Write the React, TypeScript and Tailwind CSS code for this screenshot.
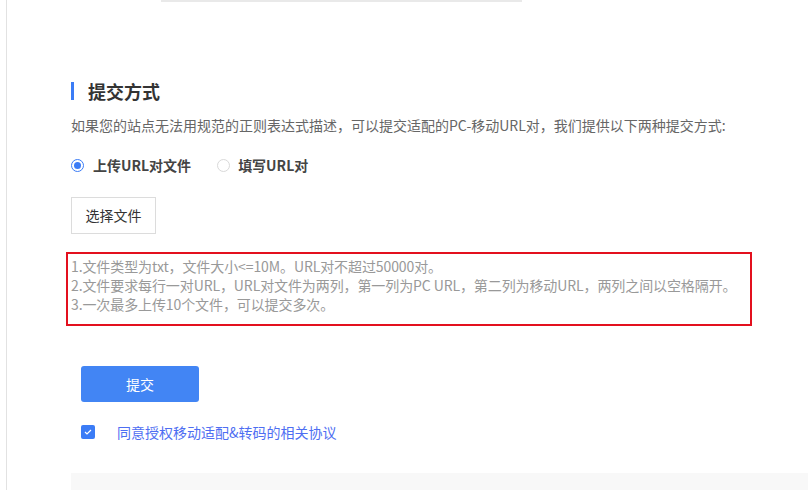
import { useState } from 'react'

const font = { fontFamily: '"Noto Sans CJK SC", "Noto Sans", sans-serif' }

export default function App() {
  const [mode, setMode] = useState<'file' | 'pair'>('file')
  const [agreed, setAgreed] = useState(true)

  return (
    <div className="w-[808px] h-[490px] overflow-hidden bg-white pl-[6px]" style={font}>
      <div className="h-full border-l border-[#e2e2e2] flex flex-col">
        {/* leftover bottom edge of the panel above */}
        <div className="ml-[154px] w-[361px] h-[2px] bg-[#e9e9e9]" />

        <div className="pl-[64px] flex flex-col">
          {/* section title */}
          <div className="mt-[79px] flex items-center h-[20px]">
            <span className="w-[3px] h-[18px] bg-[#3b7cf6]" />
            <h2 className="ml-[14px] text-[18px] font-bold leading-[20px] text-[#333]">提交方式</h2>
          </div>

          <p className="mt-[14px] text-[14px] leading-[20px] text-[#666] whitespace-nowrap">
            如果您的站点无法用规范的正则表达式描述，可以提交适配的PC-移动URL对，我们提供以下两种提交方式:
          </p>

          {/* submit mode */}
          <div className="mt-[20px] flex items-center h-[20px] text-[14px] font-bold text-[#444]">
            <button className="flex items-center" onClick={() => setMode('file')}>
              <span
                className={`w-[13px] h-[13px] rounded-full border flex items-center justify-center ${
                  mode === 'file' ? 'border-[#3b7cf6]' : 'border-[#d9d9d9]'
                }`}
              >
                {mode === 'file' && <span className="w-[7px] h-[7px] rounded-full bg-[#3b7cf6]" />}
              </span>
              <span className="ml-[9px]">上传URL对文件</span>
            </button>
            <button className="flex items-center ml-[26px]" onClick={() => setMode('pair')}>
              <span
                className={`w-[13px] h-[13px] rounded-full border flex items-center justify-center ${
                  mode === 'pair' ? 'border-[#3b7cf6]' : 'border-[#d9d9d9]'
                }`}
              >
                {mode === 'pair' && <span className="w-[7px] h-[7px] rounded-full bg-[#3b7cf6]" />}
              </span>
              <span className="ml-[8px]">填写URL对</span>
            </button>
          </div>

          <button className="mt-[22px] w-[85px] h-[37px] border border-[#dcdcdc] text-[14px] text-[#333] bg-white">
            选择文件
          </button>

          {/* notes */}
          <div className="mt-[18px] -ml-[5px] w-[686px] h-[74px] border-2 border-[#e3101e] pl-[3px] pt-[3px] text-[14px] leading-[19px] text-[#999] whitespace-nowrap tracking-[-0.1px]">
            <div>1.文件类型为txt，文件大小&lt;=10M。URL对不超过50000对。</div>
            <div>2.文件要求每行一对URL，URL对文件为两列，第一列为PC URL，第二列为移动URL，两列之间以空格隔开。</div>
            <div>3.一次最多上传10个文件，可以提交多次。</div>
          </div>

          <button className="mt-[40px] ml-[10px] w-[118px] h-[36px] rounded-[3px] bg-[#4285f4] text-white text-[14px]">
            提交
          </button>

          <div className="mt-[23px] ml-[10px] flex items-center h-[14px]">
            <button
              onClick={() => setAgreed(!agreed)}
              className={`w-[14px] h-[14px] rounded-[2px] flex items-center justify-center ${
                agreed ? 'bg-[#3b7cf6]' : 'border border-[#d9d9d9] bg-white'
              }`}
            >
              {agreed && (
                <svg width="8" height="6" viewBox="0 0 8 6" fill="none">
                  <path d="M1 3l2 2 4-4" stroke="white" strokeWidth="1.2" />
                </svg>
              )}
            </button>
            <a className="ml-[22px] text-[14px] leading-[20px] text-[#4e6ef2] cursor-pointer">
              同意授权移动适配&amp;转码的相关协议
            </a>
          </div>
        </div>

        <div className="mt-[34px] ml-[64px] flex-1 bg-[#f8f8f8]" />
      </div>
    </div>
  )
}
